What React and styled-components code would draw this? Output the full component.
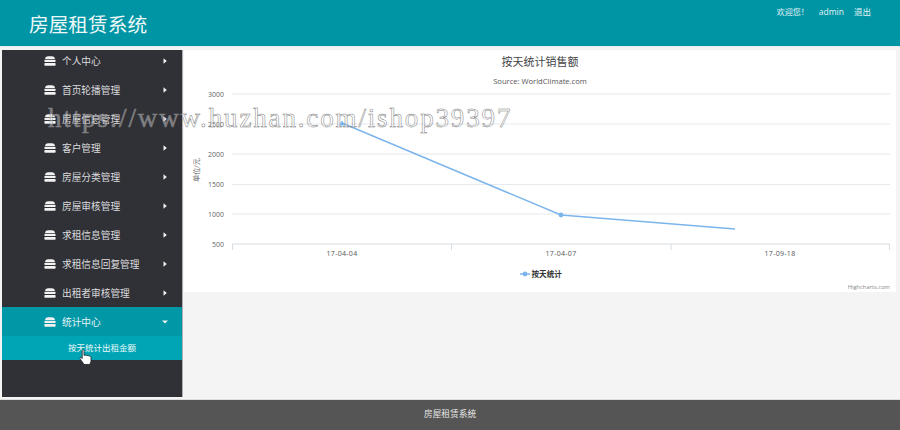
import React from 'react';
import styled, { createGlobalStyle } from 'styled-components';

const GlobalStyle = createGlobalStyle`
  html, body {
    margin: 0;
    padding: 0;
    background: #f4f4f4;
  }
  body {
    font-family: "Open Sans", "Noto Sans CJK SC", sans-serif;
  }
`;

const Page = styled.div`
  position: relative;
  width: 900px;
  height: 430px;
  display: flex;
  flex-direction: column;
  overflow: hidden;
`;

const Header = styled.header`
  height: 46px;
  flex: none;
  background: #0095a5;
  border-bottom: 1px solid #e6eaea;
  display: flex;
  justify-content: space-between;
  padding: 0 29px;
`;

const Logo = styled.h1`
  margin: 14px 0 0;
  font-size: 19.7px;
  line-height: 22px;
  font-weight: 400;
  color: #eef8f9;
`;

const UserBar = styled.div`
  display: flex;
  gap: 10px;
  padding-top: 6px;
  font-size: 8.5px;
  line-height: 12px;
  color: #e4f3f5;
`;

const Welcome = styled.span`
  font-size: 8px;
`;

const Body = styled.div`
  flex: 1;
  display: flex;
  gap: 2px;
  padding: 3px 4px 3px 2px;
  min-height: 0;
`;

const Sidebar = styled.nav`
  width: 180px;
  height: 347px;
  flex: none;
  background: #303137;
  box-shadow: 1px 0 0 #aeb0b3;
  overflow: hidden;
`;

const MenuList = styled.div`
  margin-top: -4px;
`;

const MenuRow = styled.div`
  height: 29px;
  display: flex;
  align-items: center;
  padding-left: 42px;
  color: ${p => (p.$active ? '#e6f6f7' : '#dcdcde')};
  background: ${p => (p.$active ? '#0097a7' : 'transparent')};
  font-size: 9.7px;
`;

const StackIcon = styled.svg`
  width: 12px;
  height: 10px;
  flex: none;
  margin-right: 6px;
`;

const MenuLabel = styled.span`
  flex: 1;
`;

const Caret = styled.svg`
  width: 8px;
  height: 8px;
  flex: none;
  margin-right: 13px;
`;

const SubItem = styled.div`
  height: 24px;
  background: #00a5b5;
  color: #eaf8f9;
  font-size: 8.5px;
  line-height: 24px;
  padding-left: 66px;
`;

const Panel = styled.main`
  width: 712px;
  height: 242px;
  flex: none;
  background: #fff;
`;

const ChartSvg = styled.svg`
  display: block;
  width: 712px;
  height: 242px;
`;

const Footer = styled.footer`
  height: 31px;
  flex: none;
  background: #555;
  border-top: 1px solid #ddd;
  box-sizing: border-box;
  color: #e8e8e8;
  font-size: 8.7px;
  line-height: 29px;
  text-align: center;
`;

const Watermark = styled.div`
  position: absolute;
  left: 48px;
  top: 101px;
  font-family: "Liberation Serif", serif;
  font-size: 27px;
  line-height: 34px;
  letter-spacing: 1.85px;
  white-space: nowrap;
  color: rgba(255, 255, 255, 0.4);
  -webkit-text-stroke: 0.5px #808080;
`;

const Pointer = styled.svg`
  position: absolute;
  left: 79px;
  top: 349px;
  width: 13px;
  height: 16px;
`;

const menuItems = [
  '个人中心',
  '首页轮播管理',
  '房屋信息管理',
  '客户管理',
  '房屋分类管理',
  '房屋审核管理',
  '求租信息管理',
  '求租信息回复管理',
  '出租者审核管理',
];

const grid = [
  { y: 44, label: '3000' },
  { y: 74, label: '2500' },
  { y: 104, label: '2000' },
  { y: 134.5, label: '1500' },
  { y: 164, label: '1000' },
];

const Stack = () => (
  <StackIcon viewBox="0 0 13 11">
    <path d="M1 3.2 C1.2 1 3 0.2 4.5 0.2 H8.5 C10 0.2 11.8 1 12 3.2 Z" fill="#f2f2f2" />
    <rect x="0.3" y="4" width="12.4" height="2.7" rx="0.9" fill="#f2f2f2" />
    <rect x="0.3" y="7.6" width="12.4" height="3" rx="1" fill="#f2f2f2" />
  </StackIcon>
);

const Chart = () => (
  <ChartSvg viewBox="0 0 712 242">
    <text x="356" y="16" textAnchor="middle" fontSize="11" fill="#444">按天统计销售额</text>
    <text x="356" y="34" textAnchor="middle" fontSize="7.6" fill="#555">Source: WorldClimate.com</text>

    {grid.map(g => (
      <g key={g.label}>
        <line x1="48" x2="706" y1={g.y} y2={g.y} stroke="#e6e9ee" strokeWidth="1" />
        <text x="40" y={g.y + 2.5} textAnchor="end" fontSize="7" fill="#666">{g.label}</text>
      </g>
    ))}
    <text x="40" y="196.5" textAnchor="end" fontSize="7" fill="#666">500</text>

    <path
      d="M48.5 200V194H706M267.5 194V200M487 194V200M705.5 194V200"
      fill="none"
      stroke="#d8dee4"
      strokeWidth="1"
    />
    <text x="158" y="206" textAnchor="middle" fontSize="7" fill="#555" letterSpacing="0.3">17-04-04</text>
    <text x="377" y="206" textAnchor="middle" fontSize="7" fill="#555" letterSpacing="0.3">17-04-07</text>
    <text x="596" y="206" textAnchor="middle" fontSize="7" fill="#555" letterSpacing="0.3">17-09-18</text>

    <text
      transform="translate(15 120) rotate(-90)"
      textAnchor="middle"
      fontSize="7"
      fill="#666"
    >
      单位/元
    </text>

    <polyline points="158,73 377,165 551,179" fill="none" stroke="#7cb5ec" strokeWidth="1.5" />
    <path d="M158 70.5 L161 75.5 L155 75.5 Z" fill="#7cb5ec" />
    <circle cx="377" cy="165" r="2.4" fill="#7cb5ec" />

    <line x1="336" x2="346" y1="224" y2="224" stroke="#7cb5ec" strokeWidth="1.5" />
    <circle cx="341" cy="224" r="2.4" fill="#7cb5ec" />
    <text x="347.5" y="227" fontSize="7.6" fontWeight="700" fill="#333">按天统计</text>

    <text x="706" y="239" textAnchor="end" fontSize="5.8" fill="#888">Highcharts.com</text>
  </ChartSvg>
);

export default function App() {
  return (
    <Page>
      <GlobalStyle />
      <Header>
        <Logo>房屋租赁系统</Logo>
        <UserBar>
          <Welcome>欢迎您！</Welcome>
          <span>admin</span>
          <span>退出</span>
        </UserBar>
      </Header>
      <Body>
        <Sidebar>
          <MenuList>
            {menuItems.map(label => (
              <MenuRow key={label}>
                <Stack />
                <MenuLabel>{label}</MenuLabel>
                <Caret viewBox="0 0 8 8">
                  <path d="M2.5 1.2 L5.8 4 L2.5 6.8 Z" fill="#f2f2f2" />
                </Caret>
              </MenuRow>
            ))}
            <MenuRow $active>
              <Stack />
              <MenuLabel>统计中心</MenuLabel>
              <Caret viewBox="0 0 8 8">
                <path d="M1 2.5 L7 2.5 L4 5.6 Z" fill="#f2f2f2" />
              </Caret>
            </MenuRow>
            <SubItem>按天统计出租金额</SubItem>
          </MenuList>
        </Sidebar>
        <Panel>
          <Chart />
        </Panel>
      </Body>
      <Footer>房屋租赁系统</Footer>
      <Watermark>https://www.huzhan.com/ishop39397</Watermark>
      <Pointer viewBox="0 0 13 16">
        <path
          d="M3.2 1.5 C3.2 0.5 5 0.5 5 1.5 V6.5 C6 6 7 6 7.5 6.6 C8.5 6.2 9.5 6.4 10 7.1 C11 6.9 12 7.5 12 8.6 V11.5 C12 13.5 11 14.5 10.5 15.5 H5 C4 13.5 2.5 12 1 9.8 C0.5 8.8 1.8 8 2.6 8.8 L3.2 9.6 Z"
          fill="#fff"
          stroke="#222"
          strokeWidth="0.8"
        />
      </Pointer>
    </Page>
  );
}
